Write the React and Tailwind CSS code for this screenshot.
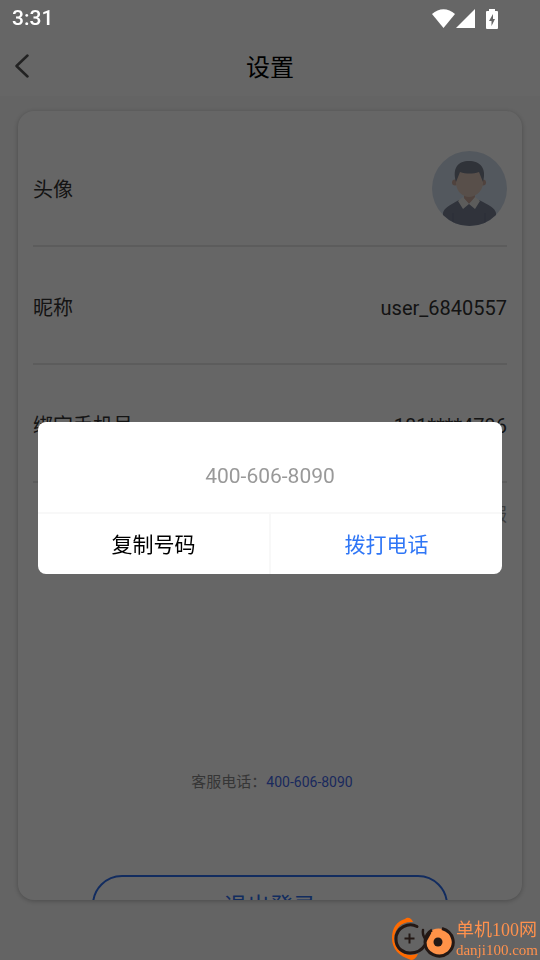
import React from 'react';

const PHONE = '400-606-8090';

const rows = [
  { id: 'nickname', label: '昵称', value: 'user_6840557' },
  { id: 'phone', label: '绑定手机号', value: '181****4796' },
];

const Avatar = () => (
  <svg viewBox="0 0 75 75" className="h-[75px] w-[75px]" role="img" aria-label="头像">
    <defs>
      <clipPath id="avatar-clip">
        <circle cx="37.5" cy="37.5" r="37.5" />
      </clipPath>
    </defs>
    <g clipPath="url(#avatar-clip)">
      <rect width="75" height="75" fill="#d0dcea" />
      <path d="M11 62C12 57 18 54 27 49L37 53L47 49C57 54 63 57 64 62V75H11Z" fill="#787f94" />
      <path d="M32 42H43V48L37 53L32 48Z" fill="#c9a79b" />
      <circle cx="23" cy="31.5" r="3" fill="#c9a79b" />
      <circle cx="51" cy="31.5" r="3" fill="#c9a79b" />
      <path d="M24 20H51V33C50 41 43 46 37 46S25 41 24 33Z" fill="#dbc5b8" />
      <path d="M24 31C20 17 26 10 37 10S55 17 51 31L47 21C41 23 34 23 28 21Z" fill="#787f8f" />
      <path d="M31 46L37 53L31 58L26 50ZM43 46L37 53L43 58L48 50Z" fill="#e6e7e4" />
      <path d="M21 62V75M53 62V75" stroke="#6d7489" />
    </g>
  </svg>
);

const StatusBar = () => (
  <div className="flex h-9 items-center justify-between pl-3 pr-[42px] pt-0.5 text-white">
    <span className="text-[21px] font-medium">3:31</span>
    <div className="flex items-center">
      <svg viewBox="0 0 24 20" className="h-5 w-6" fill="currentColor" aria-hidden="true">
        <path d="M0 5C7 -1.5 16 -1.5 23 5L11.5 19Z" />
      </svg>
      <svg viewBox="0 0 20 20" className="h-5 w-5" fill="currentColor" aria-hidden="true">
        <path d="M0 19L19 0V19Z" />
      </svg>
      <svg viewBox="1 0 12 21" className="ml-[10px] h-[21px] w-3" fill="currentColor" aria-hidden="true">
        <path fillRule="evenodd" d="M4 0H10V2H12Q13 2 13 3V19Q13 20 12 20H2Q1 20 1 19V3Q1 2 2 2H4ZM8 5L4 12H6.5V17L10 10H8Z" />
      </svg>
    </div>
  </div>
);

const Watermark = () => (
  <div className="fixed bottom-0 right-0 z-30 flex items-center pr-0.5">
    <svg viewBox="0 0 70 48" className="h-12 w-[70px]" fill="none" aria-hidden="true">
      <path d="M19 7C21 5 25 5 27 10C16 9 9 16 8 26C8 36 16 43 25 43L32 42C30 46 28 48 25 48C13 44 6 37 6 26C6 16 11 9 19 7Z" fill="#ff6a00" />
      <path d="M31 14.5C23 10 10 15 10 27C10 37 18 41 24 41C31 41 36 38 39 33" stroke="#231815" strokeWidth="3" strokeLinecap="round" />
      <path d="M18.5 26.5H28.5M23.5 21.5V31.5" stroke="#231815" strokeWidth="2" />
      <circle cx="52.5" cy="30" r="13.5" fill="#ff9248" />
      <path d="M56 16.5C68 20 71 33 62 41C53 48 39 42 39 30C39 25 42 20 46 18" stroke="#231815" strokeWidth="3" />
      <path d="M37 18C36 23 38 25 40 28L44 21" stroke="#231815" strokeWidth="2.5" strokeLinecap="round" />
      <circle cx="52" cy="30" r="4.5" fill="#231815" />
      <path d="M70 25H72V27H70Z" fill="#fff" />
    </svg>
    <div className="flex flex-col pt-2 font-['Liberation_Serif','Noto_Sans_CJK_SC',serif] text-[#ff914d]">
      <span className="text-lg leading-5">单机100网</span>
      <span className="text-[15px] leading-5">danji100.com</span>
    </div>
  </div>
);

const App = () => {
  return (
    <div className="flex h-screen flex-col overflow-hidden bg-[#fafafa] font-[Roboto,'Noto_Sans_CJK_SC',sans-serif]">
      {/* Header */}
      <header className="bg-white pt-9">
        <div className="grid h-[60px] grid-cols-[48px_1fr_48px] items-center">
          <button type="button" aria-label="返回" className="flex h-full items-center pl-[14px]">
            <svg viewBox="0 0 16 24" className="h-6 w-4" fill="none" stroke="#555" strokeWidth="2.5" strokeLinecap="round" strokeLinejoin="round">
              <path d="M13.5 1.5L2.5 12L13.5 22.5" />
            </svg>
          </button>
          <h1 className="pt-1 text-center text-2xl text-black">设置</h1>
        </div>
      </header>

      {/* Settings card */}
      <main className="mx-[18px] mb-[60px] mt-[15px] flex min-h-0 flex-1 flex-col overflow-hidden rounded-2xl bg-white px-[15px] shadow-[0_1px_5px_rgba(0,0,0,0.25)]">
        <div className="flex h-[136px] shrink-0 items-center justify-between border-b-2 border-[#e5e5e5] pt-[20px] text-xl text-[#333]">
          <span className="pt-1">头像</span>
          <Avatar />
        </div>
        {rows.map((row) => (
          <div key={row.id} className="flex h-[118px] shrink-0 items-center justify-between border-b-2 border-[#e5e5e5] pt-1.5 text-xl text-[#333]">
            <span>{row.label}</span>
            <span>{row.value}</span>
          </div>
        ))}
        <a href="#service" className="mt-[18px] shrink-0 self-end text-lg leading-7 text-[#999]">联系客服</a>
        <p className="mt-60 shrink-0 pl-1 pt-px text-center text-[15px] leading-6 text-[#888]">
          客服电话：<a href="tel:4006068090" className="text-sm text-[#4468e8]">{PHONE}</a>
        </p>
        <button type="button" className="mx-[59px] mt-[81px] h-[60px] shrink-0 rounded-full border-2 border-[#2f6fee] pt-1 text-[23px] text-[#2f6fee]">
          退出登录
        </button>
      </main>

      <div className="fixed inset-0 z-10 bg-black/60">
        <StatusBar />
      </div>

      {/* Call dialog */}
      <div className="fixed inset-0 z-20 flex items-center px-[38px] pt-9">
        <div role="dialog" aria-modal="true" aria-label="客服电话" className="w-full overflow-hidden rounded-lg bg-white">
          <p className="pb-[21px] pt-[39px] text-center text-[21px] leading-[30px] text-[#999]">{PHONE}</p>
          <div className="grid grid-cols-2 border-t-2 border-[#f8f8f8] text-[21px]">
            <button type="button" className="h-[60px] border-r border-[#f8f8f8] pt-1 text-black">复制号码</button>
            <button type="button" className="h-[60px] border-l border-[#f8f8f8] pt-1 text-[#2f76f6]">拨打电话</button>
          </div>
        </div>
      </div>

      <Watermark />
    </div>
  );
};

export default App;
